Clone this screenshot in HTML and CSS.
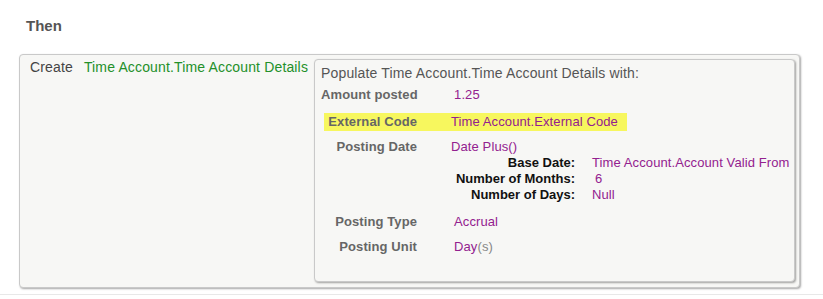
FILE: index.html
```html
<!DOCTYPE html>
<html lang="en">
<head>
    <meta charset="UTF-8">
    <meta name="viewport" content="width=device-width, initial-scale=1.0">
    <title>Rule - Then</title>
    <link rel="stylesheet" href="styles.css">
</head>
<body>
    <div class="section">
        <h3 class="section-title">Then</h3>

        <div class="action-box">
            <span class="action-verb">Create</span>
            <span class="action-target">Time Account.Time Account Details</span>

            <div class="populate-box">
                <div class="populate-title">Populate Time Account.Time Account Details with:</div>

                <div class="field amount-row">
                    <span class="field-label">Amount posted</span>
                    <span class="field-value pad">1.25</span>
                </div>

                <div class="field highlight">
                    <span class="field-label">External Code</span>
                    <span class="field-value">Time Account.External Code</span>
                </div>

                <div class="field date-row">
                    <span class="field-label">Posting Date</span>
                    <div class="field-value">
                        <div>Date Plus()</div>
                        <div class="params">
                            <span class="param-label">Base Date:</span>
                            <span class="param-value">Time Account.Account Valid From</span>
                            <span class="param-label">Number of Months:</span>
                            <span class="param-value pad">6</span>
                            <span class="param-label">Number of Days:</span>
                            <span class="param-value">Null</span>
                        </div>
                    </div>
                </div>

                <div class="field type-row">
                    <span class="field-label">Posting Type</span>
                    <span class="field-value pad">Accrual</span>
                </div>

                <div class="field unit-row">
                    <span class="field-label">Posting Unit</span>
                    <span class="field-value pad">Day<span class="muted">(s)</span></span>
                </div>
            </div>
        </div>
    </div>
</body>
</html>
```

FILE: styles.css
```css
body {
    margin: 0;
    font-family: "Liberation Sans", Arial, sans-serif;
    font-size: 14px;
    line-height: 16px;
    letter-spacing: 0.15px;
    color: #444;
    background-color: #fff;
}
.section {
    padding: 17px 23px 6px 19px;
    border-bottom: 1px solid #e8e8e8;
}
.section-title {
    margin: 0 0 20px 7px;
    font-size: 15px;
    line-height: 17px;
    font-weight: bold;
    letter-spacing: 0;
    color: #555;
}
.action-box {
    display: flex;
    align-items: flex-start;
    padding: 4px 4px 5px 10px;
    background-color: #f7f7f5;
    border: 1px solid #c9c9c9;
    border-radius: 4px;
    box-shadow: 1px 1px 2px rgba(0, 0, 0, 0.35);
}
.action-verb {
    margin-right: 11px;
    color: #444;
}
.action-target {
    margin-right: 6px;
    color: #23902a;
    white-space: nowrap;
}
.populate-box {
    flex: 1;
    min-width: 0;
    padding: 5px 6px 26px 6px;
    background-color: #f7f7f5;
    border: 1px solid #c9c9c9;
    border-radius: 4px;
    box-shadow: 1px 1px 2px rgba(0, 0, 0, 0.35);
}
.populate-title {
    color: #555;
}
.field {
    display: flex;
    align-items: flex-start;
}
.field-label {
    width: 96px;
    flex-shrink: 0;
    text-align: right;
    white-space: nowrap;
    font-size: 13px;
    font-weight: bold;
    letter-spacing: 0.1px;
    color: #666;
}
.field-value {
    margin-left: 34px;
    font-size: 13px;
    letter-spacing: 0.1px;
    color: #93218f;
}
.field-value.pad,
.param-value.pad {
    padding-left: 3px;
}
.amount-row {
    margin-top: 6px;
}
.amount-row .field-label {
    text-align: left;
}
.highlight {
    width: fit-content;
    margin: 10px 0 0 3px;
    padding: 1px 9px 1px 0;
    background-color: #f7f75e;
}
.highlight .field-label {
    width: 93px;
}
.date-row {
    margin-top: 8px;
}
.params {
    display: grid;
    grid-template-columns: 124px auto;
    column-gap: 17px;
}
.param-label {
    text-align: right;
    white-space: nowrap;
    font-size: 13px;
    font-weight: bold;
    letter-spacing: 0;
    color: #111;
}
.param-value {
    color: #93218f;
    white-space: nowrap;
}
.type-row {
    margin-top: 11px;
}
.unit-row {
    margin-top: 9px;
}
.muted {
    color: #888;
}
```
